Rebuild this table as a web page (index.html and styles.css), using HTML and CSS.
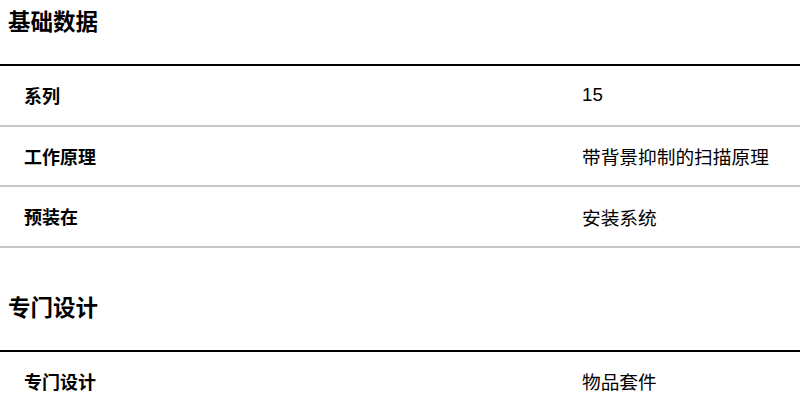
FILE: index.html
```html
<!DOCTYPE html>
<html lang="zh-CN">
<head>
<meta charset="utf-8">
<link rel="stylesheet" href="styles.css">
</head>
<body>
<section class="group">
  <h2 class="group-title">基础数据</h2>
  <div class="spec-table">
    <div class="spec-row"><div class="spec-label">系列</div><div class="spec-value">15</div></div>
    <div class="spec-row"><div class="spec-label">工作原理</div><div class="spec-value">带背景抑制的扫描原理</div></div>
    <div class="spec-row"><div class="spec-label">预装在</div><div class="spec-value">安装系统</div></div>
  </div>
</section>
<section class="group group-next">
  <h2 class="group-title">专门设计</h2>
  <div class="spec-table">
    <div class="spec-row"><div class="spec-label">专门设计</div><div class="spec-value">物品套件</div></div>
  </div>
</section>
</body>
</html>
```

FILE: styles.css
```css
html, body {
  margin: 0;
  padding: 0;
  background: #fff;
  color: #000;
  font-family: "Liberation Sans", Arial, "Noto Sans CJK SC", sans-serif;
}
.group-next {
  margin-top: 38px;
}
.group-title {
  margin: 0;
  padding: 8px 8px 26px;
  font-size: 22.5px;
  line-height: 30px;
  font-weight: bold;
}
.spec-table {
  border-top: 2px solid #000;
}
.spec-row {
  display: grid;
  grid-template-columns: 558px 1fr;
  height: 58.5px;
  align-items: center;
  border-bottom: 2px solid #c8c8c8;
}
.spec-label {
  padding-left: 24px;
  font-size: 18px;
  font-weight: bold;
}
.spec-value {
  padding-left: 24px;
  font-size: 18.7px;
}
```
